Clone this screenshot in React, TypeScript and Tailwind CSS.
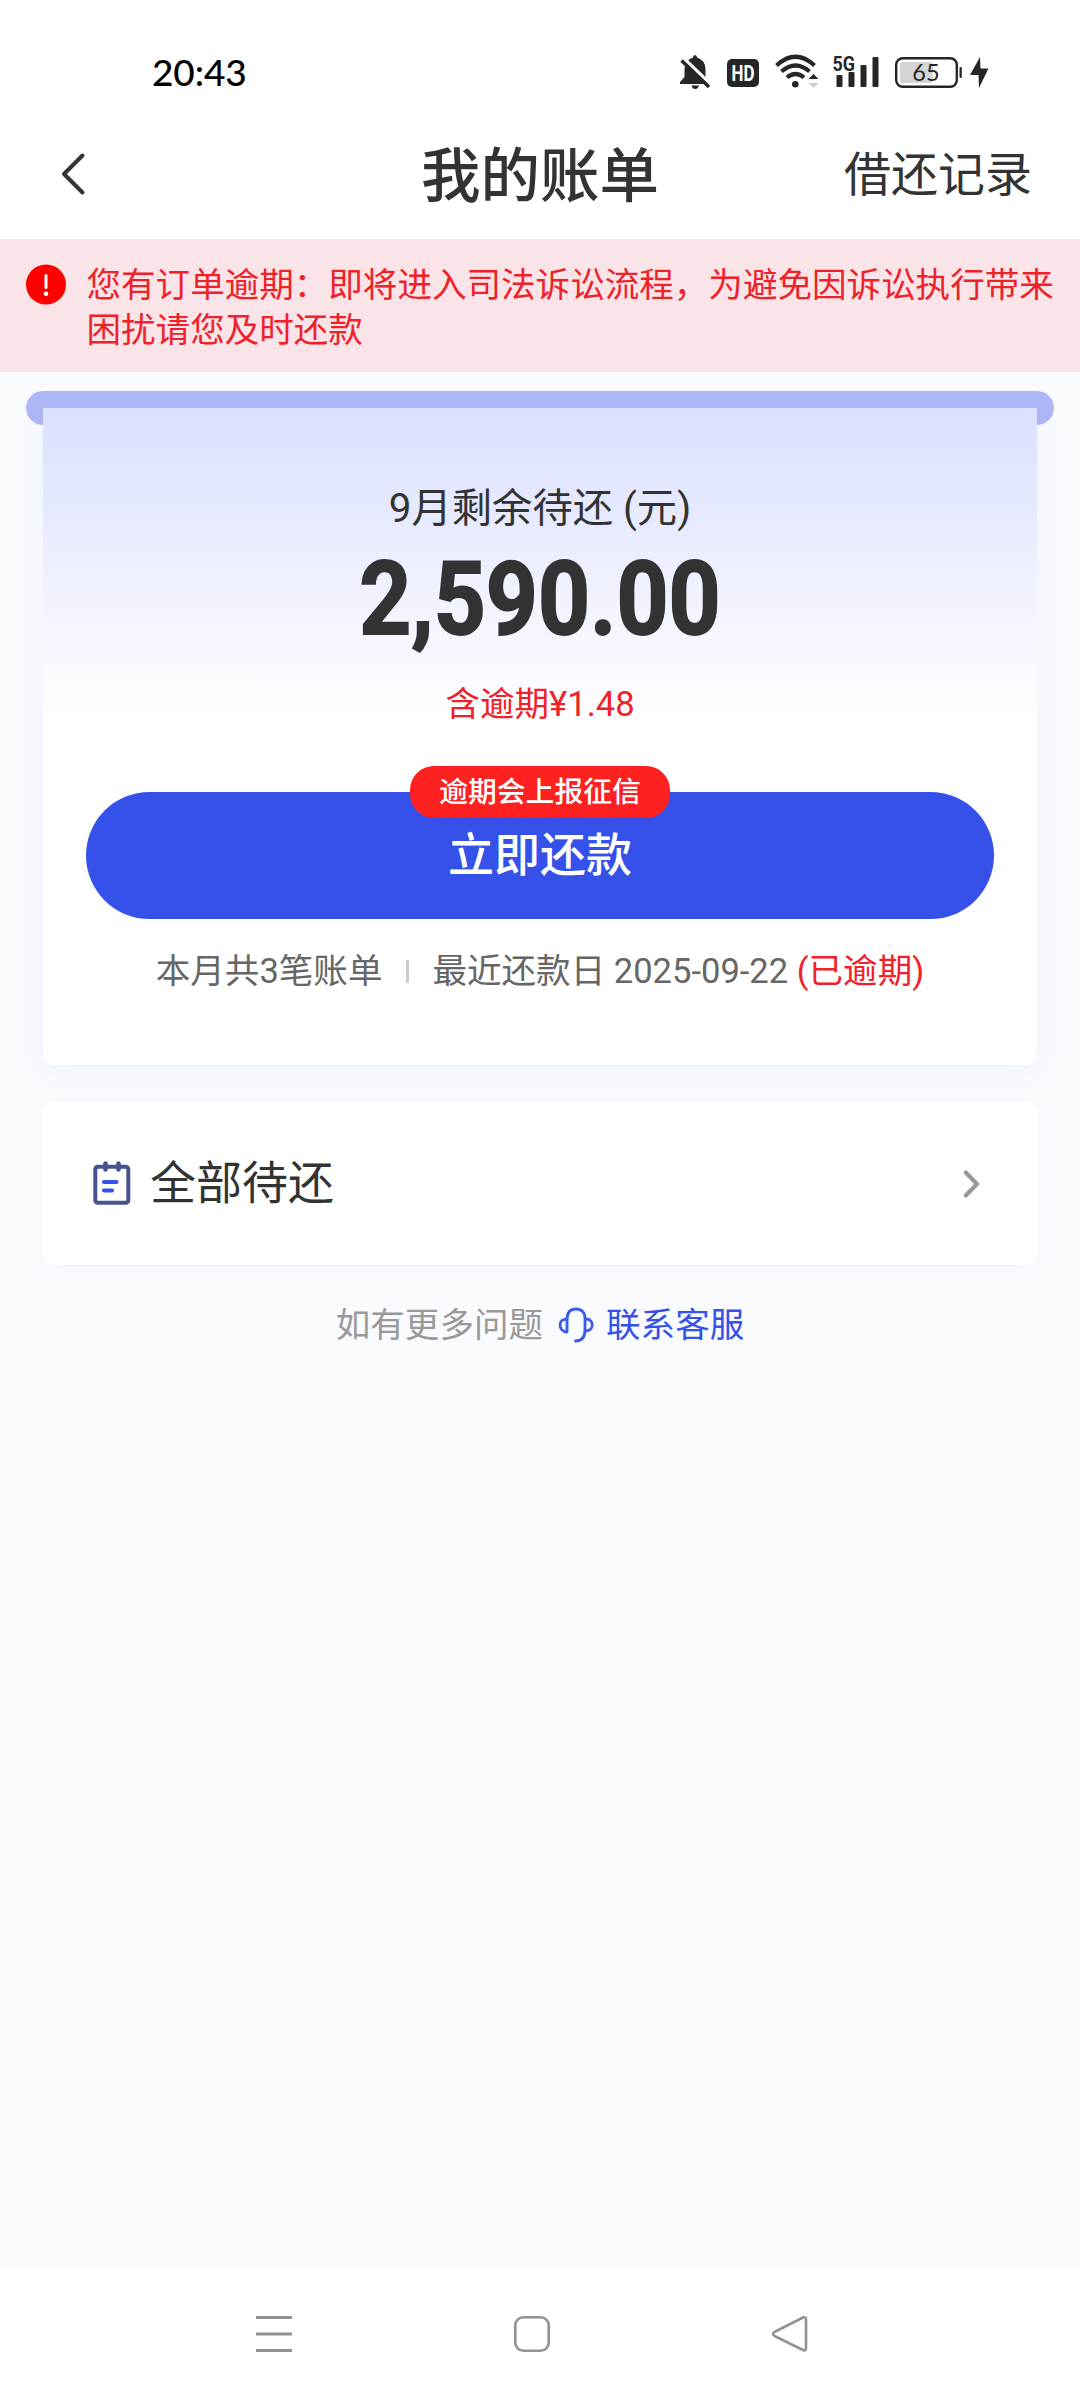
import type { ReactNode } from "react";

function StatusBar() {
  return (
    <div className="flex h-[120px] items-start justify-between pr-[90px] pl-[152px]">
      <span className="mt-[50px] text-[37px] leading-[44px] font-medium tracking-[-0.1px] text-black font-['Lato','Noto_Sans',sans-serif]">
        20:43
      </span>
      <svg className="mt-[50px] h-[42px] w-[312px]" viewBox="678 50 312 42" fill="#262626">
        <path d="M693 57.5 Q693 55 695 55 Q697 55 697 57.5 Q705 60 705.5 69 V77 L710 82 V84 H680 V82 L684.500 77 V69 Q685 60 693 57.500 Z" />
        <path d="M691.500 85.500 H699 Q698 89 695.200 89 Q692.500 89 691.500 85.500 Z" />
        <path d="M683 57.500 L712 85.500" stroke="#fff" strokeWidth="3.200" />
        <path d="M681.500 60.500 L709 87" stroke="#262626" strokeWidth="3.400" />
        <rect x="727" y="59" width="32" height="28" rx="5" />
        <text x="743" y="80.500" textAnchor="middle" textLength="23" lengthAdjust="spacingAndGlyphs" fontSize="22" fontWeight="700" fill="#fff" fontFamily="Roboto, sans-serif">HD</text>
        <g fill="none" stroke="#262626" strokeWidth="4.200">
          <path d="M776.500 65.500 Q795.500 48 814.500 65.500" />
          <path d="M781.500 71.500 Q795.500 59.500 809.500 71.500" />
          <path d="M787 77.500 Q795.500 70.500 804 77.500" />
        </g>
        <circle cx="795.300" cy="84.300" r="3.300" />
        <path d="M808.500 79 L813.500 74 L818.500 79 Z" />
        <path d="M808.500 83 L813.500 88 L818.500 83 Z" fill="#ccc" />
        <text x="832.500" y="70.500" textLength="22.500" lengthAdjust="spacingAndGlyphs" fontSize="21" fontWeight="700" fontFamily="Roboto, sans-serif">5G</text>
        <rect x="836.500" y="75" width="6" height="12" rx="1" />
        <rect x="848.500" y="72" width="6" height="15" rx="1" />
        <rect x="860.500" y="65" width="6" height="22" rx="1" />
        <rect x="872.500" y="57" width="6" height="30" rx="1" />
        <rect x="896.200" y="58.200" width="60.600" height="28.600" rx="6.500" fill="#fff" stroke="#262626" strokeWidth="2.400" />
        <rect x="900" y="62" width="33" height="21" rx="3" fill="#d4d4d4" />
        <text x="926" y="81" textAnchor="middle" fontSize="23.500" fontFamily="Lato, sans-serif">65</text>
        <rect x="959.500" y="67" width="2.300" height="11" rx="1" />
        <path d="M980 57 L970 75 H978.500 L979 88 L988.500 68.500 H980.500 Z" />
      </svg>
    </div>
  );
}

function Header() {
  return (
    <header className="grid h-[119px] grid-cols-3 items-center bg-white text-[#333]">
      <svg className="ml-[59px] h-[44px] w-[28px] -mt-[12px]" viewBox="0 0 28 44" fill="none" stroke="#333" strokeWidth="4" strokeLinecap="round" strokeLinejoin="round">
        <path d="M23.500 3.500 L5 22 L23.500 40.500" />
      </svg>
      <h1 className="-mt-[6px] text-center text-[59.500px] leading-[72px] font-medium whitespace-nowrap">我的账单</h1>
      <span className="-mt-[10px] pr-[48px] text-right text-[47px] leading-[60px]">借还记录</span>
    </header>
  );
}

function Notice() {
  return (
    <div className="flex h-[133px] bg-[#fae4e8] pl-[26px]">
      <svg className="mt-[25px] h-[41px] w-[41px] shrink-0" viewBox="0 0 41 41">
        <circle cx="20" cy="20.500" r="20" fill="#fe0000" />
        <path d="M20 11.500 V23.500" stroke="#fff" strokeWidth="3" strokeLinecap="round" />
        <circle cx="20" cy="29.800" r="2.300" fill="#fff" />
      </svg>
      <p className="mt-[24px] ml-[19.500px] text-[34.560px] leading-[45px] whitespace-nowrap text-[#ee2228]">
        您有订单逾期：即将进入司法诉讼流程，为避免因诉讼执行带来
        <br />
        困扰请您及时还款
      </p>
    </div>
  );
}

function Amount() {
  return (
    <div className="mt-[8px] flex h-[106px] justify-center">
      <span className="origin-center scale-x-[0.895] text-[101.500px] leading-[106px] font-bold text-[#333] font-['Roboto',sans-serif] [-webkit-text-stroke:1.800px_#333]">
        2,590.00
      </span>
    </div>
  );
}

function BillCard() {
  return (
    <section className="relative mt-[19px] h-[674px] px-[43px] pt-[17px]">
      <div className="absolute inset-x-[26px] top-0 h-[34px] rounded-full bg-[#aeb8f6]" />
      <div className="relative flex h-[657px] flex-col rounded-b-[12px] bg-white bg-linear-to-b from-[#dbe0ff] to-white to-[310px] pt-[71px] shadow-[0_6px_30px_rgba(80,110,200,0.06)]">
        <div className="text-center text-[40.320px] leading-[60px] text-[#333]">9月剩余待还 (元)</div>
        <Amount />
        <div className="mt-[25px] text-center text-[34.560px] leading-[52px] text-[#ee2228]">含逾期¥1.48</div>
        <div className="relative mx-[43px] mt-[62px] flex h-[127px] items-center justify-center rounded-full bg-[#3551ea] text-[46px] font-medium text-white">
          <span className="-mt-[2px] leading-[60px]">立即还款</span>
          <span className="absolute -top-[26px] left-[324px] flex h-[52px] w-[260px] items-center justify-center rounded-[24px] bg-[#ff2020] text-[28.800px] leading-[40px] font-medium">
            逾期会上报征信
          </span>
        </div>
        <div className="mt-[26px] flex items-center justify-center text-[34.560px] leading-[52px] text-[#666]">
          <span>本月共3笔账单</span>
          <i className="mr-[23px] ml-[24px] h-[23px] w-[3px] bg-[#ccc]" />
          <span>
            最近还款日 2025-09-22 <em className="text-[#ee2228] not-italic">(已逾期)</em>
          </span>
        </div>
      </div>
    </section>
  );
}

function AllDue() {
  return (
    <section className="mx-[43px] mt-[36px] flex h-[164px] items-center rounded-[12px] bg-white pr-[57px] pl-[50px] shadow-[0_2px_10px_rgba(80,110,200,0.03)]">
      <svg className="h-[44px] w-[38px]" viewBox="0 0 38 44" fill="none" strokeLinecap="round">
        <rect x="2.300" y="5.800" width="33" height="36" rx="2.500" stroke="#475390" strokeWidth="4" />
        <path d="M12.500 2.500 V8.500 M25.500 2.500 V8.500" stroke="#475390" strokeWidth="4.600" />
        <path d="M11 21 H23.500 M11 29.500 H19" stroke="#3551ea" strokeWidth="4.200" />
      </svg>
      <span className="ml-[19px] flex-1 text-[46px] leading-[60px] text-[#333]">全部待还</span>
      <svg className="mt-[2px] h-[30px] w-[18px]" viewBox="0 0 18 30" fill="none" stroke="#999" strokeWidth="4.200" strokeLinecap="round" strokeLinejoin="round">
        <path d="M3.800 3.500 L15 15 L3.800 26.500" />
      </svg>
    </section>
  );
}

function Support() {
  return (
    <div className="mt-[34px] flex items-center justify-center text-[34.560px] leading-[52px]">
      <span className="text-[#999]">如有更多问题</span>
      <svg className="mr-[12px] ml-[15px] h-[36px] w-[36px]" viewBox="0 0 36 36" fill="none" stroke="#3a5ae8" strokeWidth="2.800" strokeLinecap="round" strokeLinejoin="round">
        <path d="M9 12.500 C9 5 12.500 2 18 2 C23.500 2 27 5.500 27 11 V23 C27 29.500 24 34 17.500 34" />
        <path d="M9 12.500 C0 10.500 -0.500 24.500 9 25 Z" />
        <path d="M27.500 12 C36.500 11.500 36.500 24 27.500 24" />
      </svg>
      <span className="text-[#3551ea]">联系客服</span>
    </div>
  );
}

function NavBar({ children }: { children: ReactNode }) {
  return <nav className="flex h-[133px] items-center justify-between bg-white pr-[271px] pl-[255px]">{children}</nav>;
}

export default function App() {
  return (
    <div className="flex h-[2400px] w-[1080px] flex-col overflow-hidden bg-[#f9fbff] font-['Roboto','Noto_Sans_CJK_SC',sans-serif]">
      <div className="bg-white">
        <StatusBar />
        <Header />
      </div>
      <Notice />
      <main className="flex-1">
        <BillCard />
        <AllDue />
        <Support />
      </main>
      <NavBar>
        <svg className="h-[38px] w-[38px]" viewBox="0 0 38 38" stroke="#929292" strokeWidth="3">
          <path d="M1 2.500 H37 M1 19 H37 M1 35.500 H37" />
        </svg>
        <svg className="h-[38px] w-[38px]" viewBox="0 0 38 38" fill="none" stroke="#929292" strokeWidth="2.600">
          <rect x="2.300" y="2.300" width="33.400" height="33.400" rx="8" />
        </svg>
        <svg className="h-[38px] w-[38px]" viewBox="0 0 38 38" fill="none" stroke="#929292" strokeWidth="2.600" strokeLinejoin="round">
          <path d="M3.500 17 L32 2.500 Q35 1.500 35 4.500 V33 Q35 36.500 32 35 L3.500 21 Q0.500 19 3.500 17 Z" />
        </svg>
      </NavBar>
    </div>
  );
}
